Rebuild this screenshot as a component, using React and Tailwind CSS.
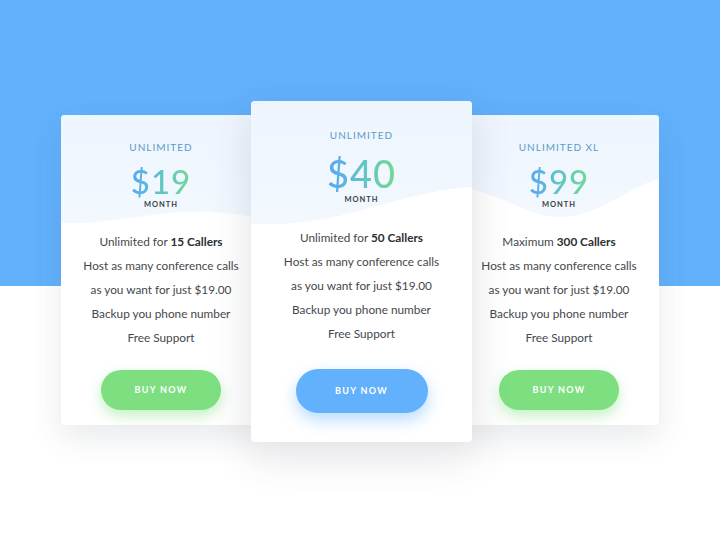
import React from "react";

const font = { fontFamily: "Lato, 'Noto Sans', sans-serif" };

function Price({ value, big }) {
  return (
    <div
      className={`bg-[linear-gradient(90deg,#57a6f5_0%,#62c3c8_50%,#72d992_100%)] bg-clip-text text-transparent font-medium leading-none tracking-[1px] ${big ? "text-[38px]" : "text-[33px]"}`}
    >
      {value}
    </div>
  );
}

function Card({ id, title, price, lines, big, wave, cls }) {
  const w = big ? 221 : 200;
  return (
    <div
      className={`relative bg-white rounded-[4px] overflow-hidden flex flex-col items-center shrink-0 ${cls} ${
        big
          ? "w-[221px] h-[341px] z-10 shadow-[0_14px_40px_rgba(60,70,90,0.16)]"
          : "w-[200px] h-[310px] mt-[14px] shadow-[0_12px_32px_rgba(60,70,90,0.12)]"
      }`}
    >
      <svg
        className="absolute left-0 top-0"
        width={w}
        height="140"
        viewBox={`0 0 ${w} 140`}
        preserveAspectRatio="none"
      >
        <defs>
          <linearGradient id={id} x1="0" y1="0" x2="0" y2="1">
            <stop offset="0" stopColor="#eef5fd" />
            <stop offset="1" stopColor="#f2f8fe" />
          </linearGradient>
        </defs>
        <path d={wave} fill={`url(#${id})`} />
      </svg>
      <div className={`relative flex flex-col items-center ${big ? "pt-[29px]" : "pt-[27px]"}`}>
        <div className="text-[10px] tracking-[1px] text-[#5d9acb] leading-none">{title}</div>
        <div className={big ? "mt-[14px]" : "mt-[13px]"}>
          <Price value={price} big={big} />
        </div>
        <div className={`text-[7.5px] font-bold tracking-[1px] text-[#3a3f48] leading-none ${big ? "mt-[4px]" : "mt-[3px]"}`}>
          MONTH
        </div>
      </div>
      <div className={`relative flex flex-col items-center text-[11.8px] text-[#45484d] leading-[24px] ${big ? "mt-[22px]" : "mt-[21px]"}`}>
        {lines.map((l, i) => (
          <div key={i}>{l}</div>
        ))}
      </div>
      <button
        className={`relative rounded-full text-white text-[9px] font-bold tracking-[1.3px] ${
          big
            ? "mt-[23px] w-[132px] h-[44px] bg-[#62b1fc] shadow-[0_7px_16px_rgba(98,177,252,0.45)]"
            : "mt-[20px] w-[120px] h-[40px] bg-[#7ddf80] shadow-[0_6px_14px_rgba(125,223,128,0.45)]"
        }`}
      >
        BUY NOW
      </button>
    </div>
  );
}

export default function App() {
  return (
    <div
      style={font}
      className="w-[720px] h-[540px] bg-[linear-gradient(to_bottom,#62b1fc_0px,#62b1fc_286px,#ffffff_286px)] flex justify-center items-start pt-[101px]"
    >
      <div className="flex items-start">
        <Card
          id="wa"
          title="UNLIMITED"
          price="$19"
          wave="M0,0 H200 V104 C160,95 130,96 100,99 C60,103 30,110 0,108 Z"
          lines={[
            <span>Unlimited for <b className="text-[#2c2f33]">15 Callers</b></span>,
            "Host as many conference calls",
            "as you want for just $19.00",
            "Backup you phone number",
            "Free Support",
          ]}
        />
        <Card
          id="wb"
          big
          cls="-ml-[10px]"
          title="UNLIMITED"
          price="$40"
          wave="M0,0 H221 V86 C180,88 140,102 100,112 C60,122 30,124 0,123 Z"
          lines={[
            <span>Unlimited for <b className="text-[#2c2f33]">50 Callers</b></span>,
            "Host as many conference calls",
            "as you want for just $19.00",
            "Backup you phone number",
            "Free Support",
          ]}
        />
        <Card
          id="wc"
          cls="-ml-[13px]"
          title="UNLIMITED XL"
          price="$99"
          wave="M0,0 H200 V64 C170,72 140,100 105,102 C70,104 45,78 0,72 Z"
          lines={[
            <span>Maximum <b className="text-[#2c2f33]">300 Callers</b></span>,
            "Host as many conference calls",
            "as you want for just $19.00",
            "Backup you phone number",
            "Free Support",
          ]}
        />
      </div>
    </div>
  );
}
